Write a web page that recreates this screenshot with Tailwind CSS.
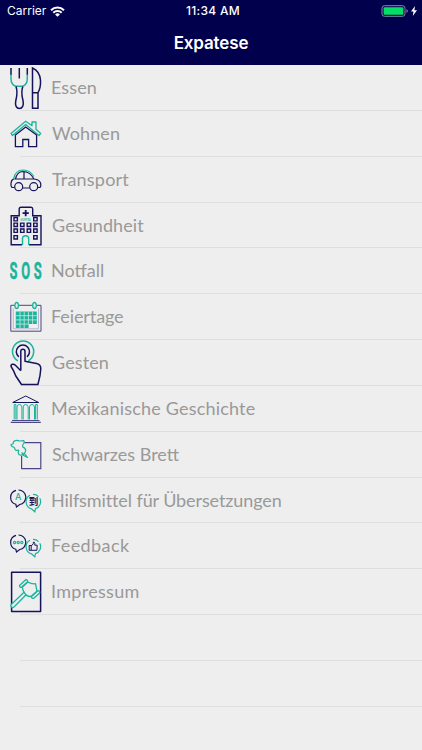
<!DOCTYPE html>
<html lang="de">
<head>
  <meta charset="UTF-8" />
  <meta name="viewport" content="width=device-width, initial-scale=1.0" />
  <title>Expatese</title>
  <script src="https://cdn.jsdelivr.net/npm/@tailwindcss/browser@4"></script>
</head>
<body class="bg-[#eeeeee] h-[750px] overflow-hidden font-['Lato',sans-serif]">
  <header class="h-[65px] bg-[#00004c] text-white font-['Inter',sans-serif]">
    <!-- Status bar -->
    <div class="grid grid-cols-3 items-center h-[22px] pl-[7px] pr-[5px]">
      <div class="flex items-center gap-[4px] text-[12px]">
        <span>Carrier</span>
        <svg class="w-[15px] h-[11px]" viewBox="0 0 15 11" fill="none" stroke="white" stroke-width="2">
          <path d="M1 4.2a9.4 9.4 0 0 1 13 0M3.3 6.8a6 6 0 0 1 8.4 0" />
          <path d="M7.5 10.7 5.1 8.4a3.4 3.4 0 0 1 4.8 0z" fill="white" stroke="none" />
        </svg>
      </div>
      <div class="pl-[2px] text-center text-[12px] font-medium tracking-[0.3px] whitespace-nowrap">11:34 AM</div>
      <div class="flex items-center justify-end gap-[3px]">
        <svg class="w-[27px] h-[12px]" viewBox="0 0 27 12" fill="none">
          <rect x="1" y=".7" width="23" height="10.6" rx="2.5" stroke="#7f90a4" />
          <rect x="2.6" y="2.3" width="19.8" height="7.4" rx="1" fill="#04de65" />
          <path d="M25.5 4v4q1.3-.8 1.3-2t-1.3-2z" fill="#8c8cb0" />
        </svg>
        <svg class="w-[6px] h-[10px]" viewBox="0 0 6 10" fill="white">
          <path d="M4 0 0 5.6h2.500L1.800 10 6 4.200H3.400z" />
        </svg>
      </div>
    </div>
    <h1 class="text-center text-[17px] leading-[43px] font-semibold tracking-[-0.15px]">Expatese</h1>
  </header>

  <ul class="text-[#999999] text-[18px] leading-[44px]">
    <li class="flex h-[45.85px] ml-[20px] border-b border-[#dedede]">
      <svg class="w-8 h-[46px] -ml-[10px] shrink-0" viewBox="0 0 32 46" fill="none" stroke="#16125c" stroke-width="1.5">
        <path d="M1 3v7M17.3 3v7M9.3 3v10.5" />
        <path d="M1 9.5v4q0 6.5 5 7.8h6.3q5-1.3 5-7.8v-4" stroke="#1bb49c" />
        <path d="M6 21.5c2 6 1 9-.2 14-1 5 .6 8 3.6 8s4.6-3 3.6-8c-1.2-5-2.2-8-.2-14M22.5 43.3V3q7 3 8 12 .4 8-2.5 12.700v15.600zM22.5 27.700H28" />
      </svg>
      <span class="ml-[9px] tracking-[0.1px]">Essen</span>
    </li>
    <li class="flex h-[45.85px] ml-[20px] border-b border-[#dedede]">
      <svg class="w-8 h-[46px] -ml-[10px] shrink-0" viewBox="0 0 32 46" fill="none" stroke="#16125c" stroke-width="1.3">
        <path d="m2.500 24.600 13.200-11 13.300 11 1.700-2.200-4.700-4.200v-7.200h-4v3.800l-6.300-4.600L1 22.400z" stroke="#1bb49c" stroke-linejoin="round" />
        <path d="M5.400 24v11.700h7.400v-7.200h5.800v7.200h8V24L15.700 16z" />
      </svg>
      <span class="ml-[10px] tracking-[0.1px]">Wohnen</span>
    </li>
    <li class="flex h-[45.85px] ml-[20px] border-b border-[#dedede]">
      <svg class="w-8 h-[46px] -ml-[10px] shrink-0" viewBox="0 0 32 46" fill="none" stroke="#16125c" stroke-width="1.2">
        <path d="M4.600 30.500H2.200Q.8 30 1 26.500q.3-4 3.500-4.800M12.800 31h6.800M27.800 30.500h2q1.300-.5.900-4-1-4-6.700-4.500-4-7.500-11-7.500-6 .2-7.500 7.500H24M14 14.500V22" />
        <path d="M3.600 22q1.400-9 9.700-9 7 .3 10.600 6.500" stroke="#1bb49c" />
        <circle cx="8.700" cy="29.700" r="4" /><circle cx="23.700" cy="29.700" r="4" />
      </svg>
      <span class="ml-[10px] tracking-[0.2px]">Transport</span>
    </li>
    <li class="flex h-[45.85px] ml-[20px] border-b border-[#dedede]">
      <svg class="w-8 h-[46px] -ml-[10px] shrink-0" viewBox="0 0 32 46" fill="none" stroke="#16125c" stroke-width="1.4">
        <path d="M12 41.800H1.200v-29h8V6q0-1.800 1.800-1.800h10q1.700 0 1.700 1.800v6.800H31v29H19" />
        <path d="M15.700 7v6.200M12.600 10.100h6.200" stroke-width="1.800" />
        <path d="M4 14.500h3.400v3.400H4zM23.700 14.500h3.400v3.400h-3.400zM4 20.100h3.400v3.400H4zM10.600 20.100H14v3.400h-3.400zM17.200 20.100h3.400v3.400h-3.400zM23.700 20.100h3.400v3.400h-3.400zM4 26h3.400v3.400H4zM10.600 26H14v3.400h-3.400zM17.200 26h3.400v3.400h-3.400zM23.700 26h3.400v3.400h-3.400zM4 32.600h3.400V36H4zM23.700 32.600h3.400V36h-3.400z" stroke-width="1.4" />
        <path d="M12.500 42v-6.500q0-2.800 3.100-2.800t3.100 2.800V42" stroke="#1bb49c" />
        <text x="10.500" y="17.500" font-size="3.800" font-weight="900" textLength="10.500" lengthAdjust="spacingAndGlyphs" fill="#1bb49c" stroke="none">HOSPITAL</text>
      </svg>
      <span class="ml-[10px] tracking-[0.1px]">Gesundheit</span>
    </li>
    <li class="flex h-[45.85px] ml-[20px] border-b border-[#dedede]">
      <svg class="w-8 h-[46px] -ml-[10px] shrink-0" viewBox="0 0 32 46">
        <text transform="scale(.56 1)" x="-1 20.200 42.500" y="31.200" font-family="Roboto" font-size="23" font-weight="bold" fill="#1bb49c" stroke="#1bb49c" stroke-width=".5">SOS</text>
      </svg>
      <span class="ml-[9px]">Notfall</span>
    </li>
    <li class="flex h-[45.85px] ml-[20px] border-b border-[#dedede]">
      <svg class="w-8 h-[46px] -ml-[10px] shrink-0" viewBox="0 0 32 46" fill="none" stroke="#1bb49c">
        <path d="M.8 11.300H31v25.900H.8z" stroke="#4a4783" />
        <path d="M3.300 14.500v20.300h25.200V14.500" stroke="#aaa9c4" stroke-width=".8" />
        <path d="M5.800 17.600h21v12.500h-8.200v4H5.800z" fill="#1bb49c" stroke="none" />
        <path d="M10 17.600v16.500M14.200 17.600v16.500M18.400 17.600v12.500M22.600 17.600v12.500M5.800 21.700h21M5.800 25.900h21M5.800 30.100h12.800" stroke="#c9ebe6" stroke-width=".8" />
        <ellipse cx="6.700" cy="11.500" rx="1.800" ry="3" fill="#d8eeeb" stroke-width="1.300" />
        <ellipse cx="24.500" cy="11.500" rx="1.800" ry="3" fill="#d8eeeb" stroke-width="1.300" />
      </svg>
      <span class="ml-[9px] tracking-[-0.1px]">Feiertage</span>
    </li>
    <li class="flex h-[45.85px] ml-[20px] border-b border-[#dedede]">
      <svg class="w-8 h-[46px] -ml-[10px] shrink-0" viewBox="0 0 32 46" fill="none" stroke="#16125c" stroke-width="1.5" stroke-linejoin="round">
        <path d="M7.800 20.800a10.600 10.600 0 1 1 10.600 0" stroke="#1bb49c" />
        <path d="M8.800 16.800a6.600 6.600 0 1 1 8.200 0" />
        <path d="M10.800 30.500V11.500q0-2.200 2.100-2.200t2.100 2.200v9.800l11.500 2.300q4.300 1 4.300 5.200-.3 7-2.900 15.700H11.500L5.800 36Q3.500 30 1.200 26.800q-.7-1.800 1-2.500 1.700-.5 3.200 1l5.400 5.400" />
      </svg>
      <span class="ml-[10px] tracking-[0.1px]">Gesten</span>
    </li>
    <li class="flex h-[45.85px] ml-[20px] border-b border-[#dedede]">
      <svg class="w-8 h-[46px] -ml-[10px] shrink-0" viewBox="0 0 32 46" fill="none" stroke="#16125c">
        <path d="m15.700 10 13 6.500H2.700z" />
        <path d="M4.200 33.500V18.500h1.700v15M25.600 33.500v-15h1.700v15M7 33.500V21q.3-2.500 2.400-2.500t2.500 2.500v12.500M13.200 33.500V21q.3-2.500 2.500-2.500t2.500 2.500v12.500M19.500 33.500V21q.3-2.500 2.500-2.500t2.500 2.500v12.500" stroke="#1bb49c" />
        <path d="M2 34.500h27.500M.8 36.300h30" stroke="#4a4783" stroke-width="1.2" />
      </svg>
      <span class="ml-[9px] tracking-[0.2px]">Mexikanische Geschichte</span>
    </li>
    <li class="flex h-[45.85px] ml-[20px] border-b border-[#dedede]">
      <svg class="w-8 h-[46px] -ml-[10px] shrink-0" viewBox="0 0 32 46" fill="none" stroke="#4a4783" stroke-width="1.2">
        <path d="M14.500 10.700h16.300v26H11.600V24" />
        <path d="M1 12.500Q3.800 12.300 3.500 9.700q2.500-2 5.700-.8 1.800.3 4.300-.4 1.600 1.600-.1 3.400-1.300 1.200-.6 3.200 2.700.7 2.900 3.500 0 1.700-1.500 2.500l3.300 4.400-5.300-2.800q-1.800 1-3.200-.2-1.500-1.800-.3-4.300-2.200.6-3.500-.5-.4-2.200-1.800-2.700-2.400-.5-2.400-2.500zM11.500 20.500l2.500 2.300" stroke="#1bb49c" stroke-linejoin="round" />
      </svg>
      <span class="ml-[10px]">Schwarzes Brett</span>
    </li>
    <li class="flex h-[45.85px] ml-[20px] border-b border-[#dedede]">
      <svg class="w-8 h-[46px] -ml-[10px] shrink-0" viewBox="0 0 32 46" fill="none" stroke="#16125c" stroke-width="1.2">
        <path d="M6 12.300A7.300 7.300 0 0 0 5.800 26.300L6.500 29l3.200-2.500A7.300 7.300 0 0 0 8.500 12" />
        <path d="M20 17.300a7.300 7.300 0 0 0 1.500 13.500l3.300 3 .7-3.200a7.300 7.300 0 0 0 4.300-10.300M23 16.400a7.300 7.300 0 0 1 5.500 2.300" stroke="#1bb49c" />
        <text x="8.100" y="22.300" font-size="8.500" font-weight="bold" text-anchor="middle" fill="#1bb49c" stroke="none">A</text>
        <text x="23.400" y="27.300" font-family="Noto Sans CJK SC" font-size="9.500" font-weight="bold" text-anchor="middle" fill="#16125c" stroke="none">到</text>
      </svg>
      <span class="ml-[9px] tracking-[-0.1px]">Hilfsmittel für Übersetzungen</span>
    </li>
    <li class="flex h-[45.85px] ml-[20px] border-b border-[#dedede]">
      <svg class="w-8 h-[46px] -ml-[10px] shrink-0" viewBox="0 0 32 46" fill="none" stroke="#16125c" stroke-width="1.2">
        <path d="M6 12.300A7.300 7.300 0 0 0 5.800 26.300L6.500 29l3.200-2.500A7.300 7.300 0 0 0 8.500 12" />
        <g stroke="#1bb49c">
          <path d="M20 17.300a7.300 7.300 0 0 0 1.500 13.500l3.300 3 .7-3.200a7.300 7.300 0 0 0 4.300-10.300M23 16.400a7.300 7.300 0 0 1 5.500 2.300" />
          <circle cx="4.600" cy="19.500" r="1.100" /><circle cx="8.200" cy="19.500" r="1.100" /><circle cx="11.800" cy="19.500" r="1.100" />
        </g>
        <path d="M19.200 22.500h2v4.800h-2zM21.200 23l2.100-2.200v-1.600q1.500-.3 1.500 1.200v1.800h2.400l-.3 5.100h-5.700" stroke-width="1" />
      </svg>
      <span class="ml-[9px] tracking-[0.4px]">Feedback</span>
    </li>
    <li class="flex h-[45.85px] ml-[20px] border-b border-[#dedede]">
      <svg class="w-8 h-[46px] -ml-[10px] shrink-0" viewBox="0 0 32 46" fill="none" stroke="#1bb49c" stroke-width="1.3" stroke-linejoin="round">
        <path d="M1.600 3.300h29v39.200h-29z" stroke="#16125c" stroke-width="1.5" />
        <path d="M14 23.200 1.300 35.500q-1 1.500.2 2.500t2.500 0L16.300 25.500" fill="#eeeeee" />
        <path d="m12.200 18.200 5.600-5.200q4 2.300 7.700 1.700l1.500 7.500-6 5.300q-4.500.3-6.300-3.400-1.800-2-2.500-5.900z" />
        <path d="m9.500 16.500 6.200-5.800q2-.2 1.900 2l-6.100 5.600q-2 .1-2-1.800zM21.400 27.500l6.300-5.800q2.400 0 2 2.200l-6 5.400q-2.300.2-2.300-1.800z" />
      </svg>
      <span class="ml-[9px] tracking-[0.3px]">Impressum</span>
    </li>
    <!-- Empty rows -->
    <li class="h-[45.85px] ml-[20px] border-b border-[#dedede]"></li>
    <li class="h-[45.85px] ml-[20px] border-b border-[#dedede]"></li>
  </ul>
</body>
</html>
